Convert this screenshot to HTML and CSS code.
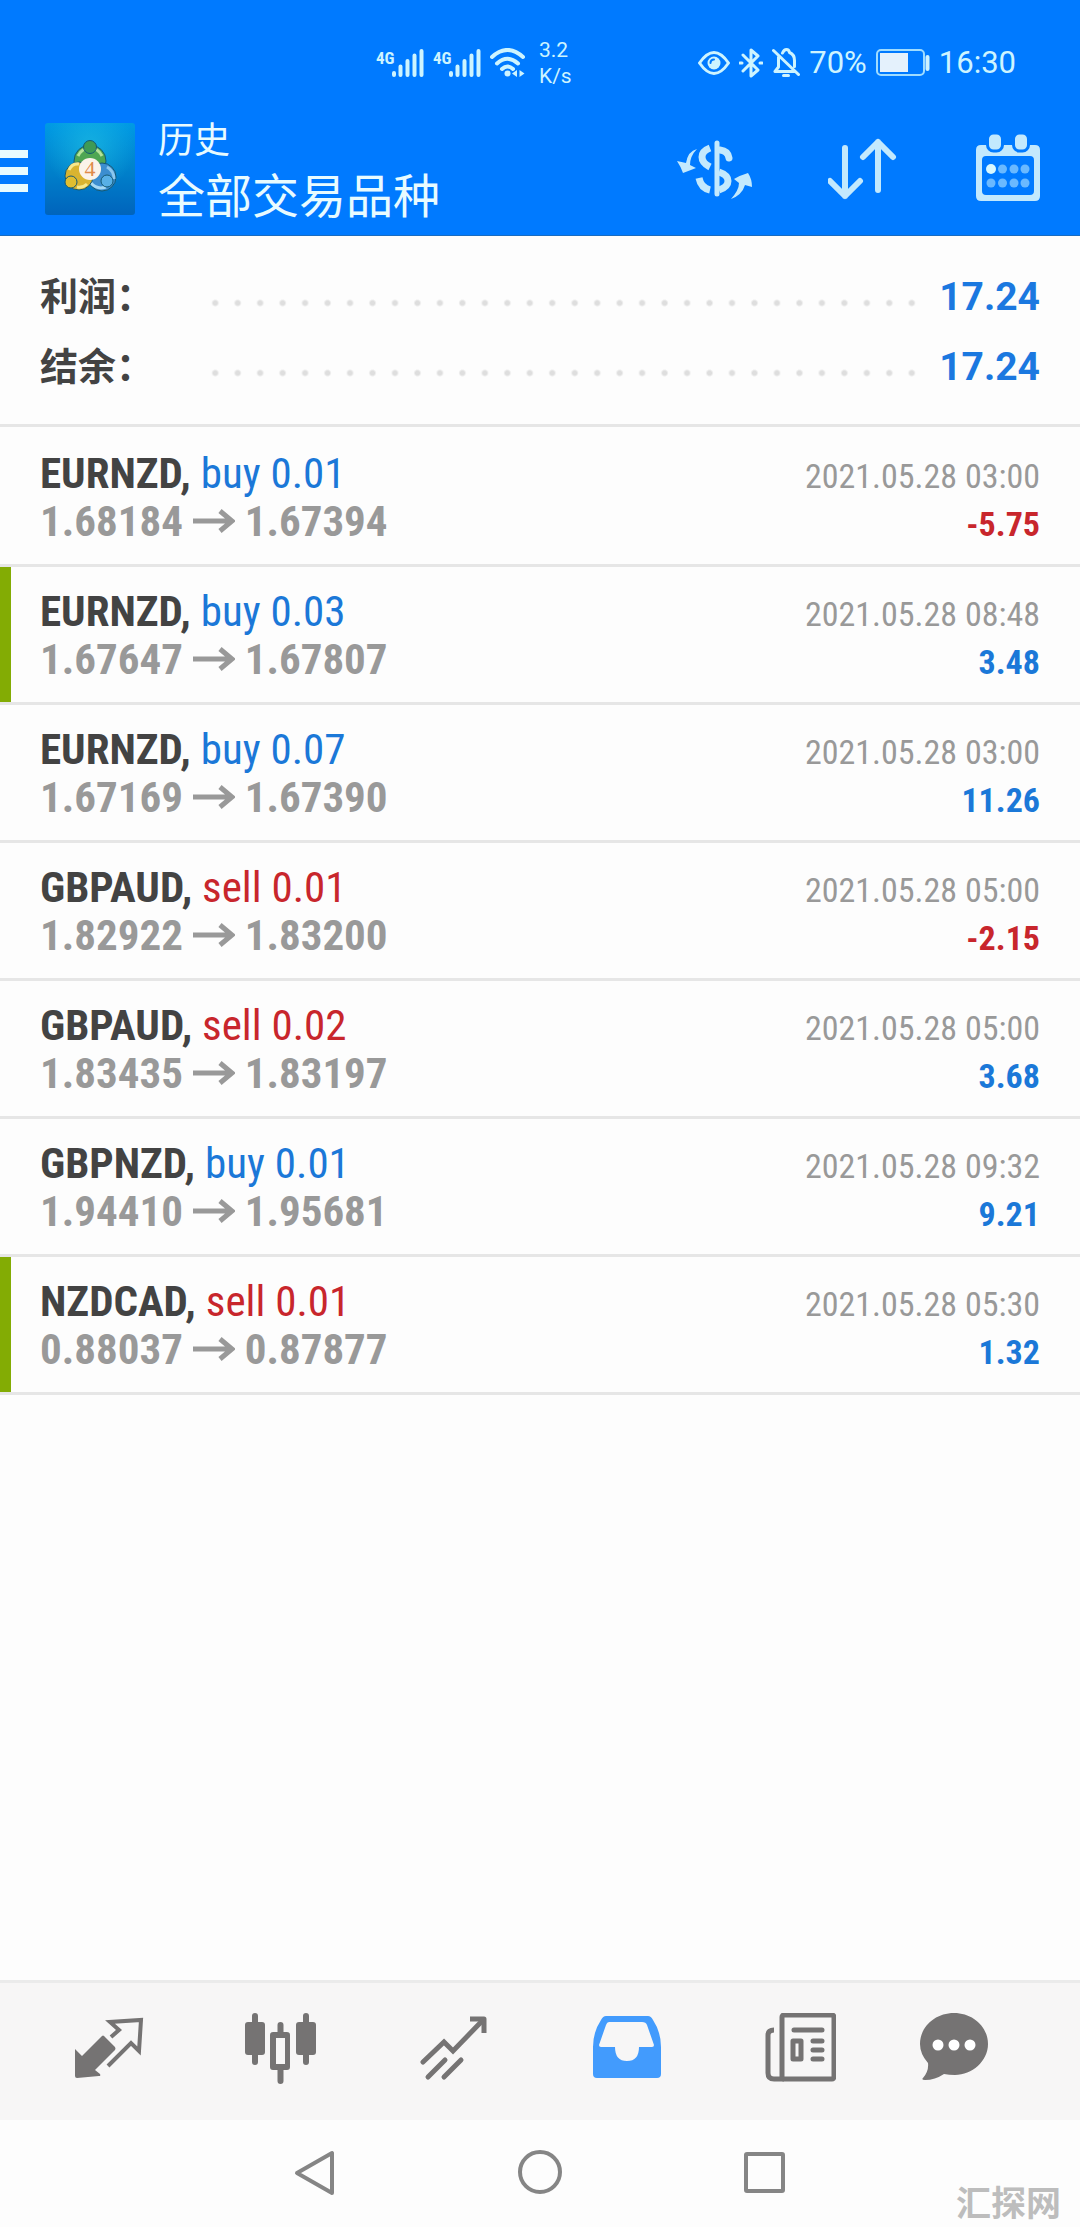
FILE: index.html
```html
<!DOCTYPE html>
<html lang="zh-CN">
<head>
<meta charset="utf-8">
<meta name="viewport" content="width=device-width, initial-scale=1">
<title>历史</title>
<link rel="stylesheet" href="styles.css">
</head>
<body>
<div class="app">
  <header class="top">
    <div class="status">
      <div class="status-left">
        <div class="signal"><span class="net">4G</span><svg width="32" height="30" viewBox="0 0 32 30" role="img" aria-label="信号"><path d="M2 27v-2M8.500 27v-8.500M15.500 27V13M22.500 27V7.500M29.500 27V3"/></svg></div>
        <div class="signal"><span class="net">4G</span><svg width="32" height="30" viewBox="0 0 32 30" role="img" aria-label="信号"><path d="M2 27v-2M8.500 27v-8.500M15.500 27V13M22.500 27V7.500M29.500 27V3"/></svg></div>
        <svg width="36" height="30" viewBox="0 0 36 30" class="wifi" role="img" aria-label="无线网络"><path d="M2 9Q17.500-5 33 9M7 15.500Q17.500 6 28 15.500M12 21q5.500-5 11 0"/><circle cx="17.500" cy="25.500" r="3"/><path class="solid" d="M27 22v7l-5-3.500zM29.500 22v7l5-3.500z"/></svg>
        <div class="speed">3.2<br>K/s</div>
      </div>
      <div class="status-right">
        <svg width="32" height="30" viewBox="0 0 32 30" class="line" aria-hidden="true"><path d="M1.500 15Q16-6 30.500 15Q16 36 1.500 15z"/><circle cx="16" cy="15" r="6.500" class="solid"/><path class="cut" d="M12.500 15q0-3.500 3.500-3.500"/></svg>
        <svg width="24" height="30" viewBox="0 0 24 30" class="line" aria-hidden="true"><path d="M4 7l15 15-7 6V2l7 6L4 23"/><path d="M1 15h2M21 15h2"/></svg>
        <svg width="28" height="30" viewBox="0 0 28 30" class="line" aria-hidden="true"><path d="M1.500 2.500l25 24M3 23.500h19M3 23.500l3.500-4.500V9M10.500 5q1.500-3.500 4-3.500t3 3q5 2 5 8v6M11.500 27.500h5"/></svg>
        <span class="pct">70%</span>
        <svg width="54" height="28" viewBox="0 0 54 28" aria-hidden="true"><rect x="1" y="1" width="47" height="25" rx="4" fill="none" stroke="#9fdcff" stroke-width="2"/><rect x="4" y="4" width="28" height="19" fill="#e4f1fc"/><path d="M51.500 8v12" stroke="#cdf1ff" stroke-width="4" stroke-linecap="round"/></svg>
        <span class="clock">16:30</span>
      </div>
    </div>
    <div class="bar">
      <button class="menu" aria-label="菜单"><svg width="28" height="42" viewBox="0 0 28 42"><path d="M0 0h28v8H0zM0 17h28v8H0zM0 34h28v8H0z" fill="#e8fbff"/></svg></button>
      <svg class="logo" width="90" height="92" viewBox="0 0 90 92" role="img" aria-label="MetaTrader 4">
        <defs>
          <linearGradient id="bg" x1="0" y1="0" x2="0" y2="1"><stop offset="0" stop-color="#009ae4"/><stop offset=".5" stop-color="#0082cc"/><stop offset="1" stop-color="#0064bc"/></linearGradient>
          <radialGradient id="glow" cx=".5" cy=".25" r=".5"><stop offset="0" stop-color="#22c4e4" stop-opacity=".6"/><stop offset="1" stop-color="#22c4e4" stop-opacity="0"/></radialGradient>
        </defs>
        <rect width="90" height="92" rx="3" fill="url(#bg)"/><rect width="90" height="92" fill="url(#glow)"/>
        <g stroke="#155a74" stroke-width="1">
          <circle cx="45" cy="38" r="16" fill="#4fa653"/><path d="M33 33q4-8 12-8t12 8" stroke="#b6e29a" stroke-width="3" fill="none"/>
          <circle cx="57" cy="54" r="14" fill="#3c8ed0"/><path d="M46 60q6 7 15 4" stroke="#a4d8f4" stroke-width="3" fill="none"/><path d="M62 44q7 4 7 12" stroke="#8cc8ee" stroke-width="3" fill="none"/>
          <circle cx="34" cy="53" r="14" fill="#d9b430"/><path d="M24 47q3-7 10-6" stroke="#f6e88c" stroke-width="3" fill="none"/><path d="M32 64q6 1 10-3" stroke="#f6e88c" stroke-width="3" fill="none"/>
          <circle cx="45" cy="24" r="6.500" fill="#3f9a55"/><circle cx="26" cy="59" r="6" fill="#e0be30"/><circle cx="62" cy="58" r="6" fill="#58b0e6"/>
        </g>
        <circle cx="45" cy="46" r="11" fill="#fbf3ea"/><text x="45" y="53" text-anchor="middle" class="four">4</text>
      </svg>
      <div class="titles"><div class="sub">历史</div><h1 class="title">全部交易品种</h1></div>
      <div class="actions">
        <button aria-label="品种"><svg width="76" height="72" viewBox="0 0 76 72"><g fill="none" stroke="#c3e9fd" stroke-width="7"><path d="M40 10v51" stroke-width="5" stroke-linecap="round"/><path d="M33 15q-8 3-8 9t8 10M22 45q2 10 11 12"/><path d="M43 17q8 1 9 8" stroke-linecap="round"/><path d="M42 39q9 3 9 9t-9 9"/></g><path fill="#c3e9fd" d="M20 16q-9 2-11 14L0 28q4 6 6 12 8-3 13-5l-6-3q0-9 7-16zM54 66q11-4 14-14l7 2q0-8-4-14-7 2-14 6l5 4q0 7-8 16z"/></svg></button>
        <button aria-label="排序"><svg width="72" height="72" viewBox="0 0 72 72" fill="none" stroke="#c3e9fd" stroke-width="6" stroke-linecap="round" stroke-linejoin="round"><path d="M17 15v48M2 48l15 15 15-15M50 57V9M35 24L50 9l15 15"/></svg></button>
        <button aria-label="日历"><svg width="66" height="72" viewBox="0 0 66 72"><path fill="#c3e9fd" fill-rule="evenodd" d="M6 12h54q5 0 5 5v46q0 5-5 5H6q-5 0-5-5V17q0-5 5-5zm5 11q-4 0-4 4v31q0 4 4 4h44q4 0 4-4V27q0-4-4-4z"/><g fill="#c3e9fd" stroke="#007aff" stroke-width="3"><rect x="12.500" y="0" width="15" height="18" rx="6"/><rect x="38.500" y="0" width="15" height="18" rx="6"/></g><g fill="#6ab9ff"><circle cx="16" cy="36" r="5" fill="#d8f8ff"/><circle cx="27.500" cy="36" r="4.500"/><circle cx="39" cy="36" r="4.500"/><circle cx="50" cy="36" r="4.500"/><circle cx="16" cy="50" r="4.500"/><circle cx="27.500" cy="50" r="4.500"/><circle cx="39" cy="50" r="4.500"/><circle cx="50" cy="50" r="4.500"/></g></svg></button>
      </div>
    </div>
  </header>

  <main class="content">
    <dl class="summary">
      <div class="sum-row"><dt>利润：</dt><dd class="dots" aria-hidden="true"></dd><dd>17.24</dd></div>
      <div class="sum-row"><dt>结余：</dt><dd class="dots" aria-hidden="true"></dd><dd>17.24</dd></div>
    </dl>
    <ul class="deals">
      <li class="deal"><div><div class="name">EURNZD, <span class="buy">buy 0.01</span></div><div class="price">1.68184 <svg class="arrow" viewBox="0 0 42 24"><path d="M0 12h38M27 2l12 10-12 10"/></svg> 1.67394</div></div><div class="right"><time>2021.05.28 03:00</time><div class="profit loss">-5.75</div></div></li>
      <li class="deal marked"><div><div class="name">EURNZD, <span class="buy">buy 0.03</span></div><div class="price">1.67647 <svg class="arrow" viewBox="0 0 42 24"><path d="M0 12h38M27 2l12 10-12 10"/></svg> 1.67807</div></div><div class="right"><time>2021.05.28 08:48</time><div class="profit">3.48</div></div></li>
      <li class="deal"><div><div class="name">EURNZD, <span class="buy">buy 0.07</span></div><div class="price">1.67169 <svg class="arrow" viewBox="0 0 42 24"><path d="M0 12h38M27 2l12 10-12 10"/></svg> 1.67390</div></div><div class="right"><time>2021.05.28 03:00</time><div class="profit">11.26</div></div></li>
      <li class="deal"><div><div class="name">GBPAUD, <span class="sell">sell 0.01</span></div><div class="price">1.82922 <svg class="arrow" viewBox="0 0 42 24"><path d="M0 12h38M27 2l12 10-12 10"/></svg> 1.83200</div></div><div class="right"><time>2021.05.28 05:00</time><div class="profit loss">-2.15</div></div></li>
      <li class="deal"><div><div class="name">GBPAUD, <span class="sell">sell 0.02</span></div><div class="price">1.83435 <svg class="arrow" viewBox="0 0 42 24"><path d="M0 12h38M27 2l12 10-12 10"/></svg> 1.83197</div></div><div class="right"><time>2021.05.28 05:00</time><div class="profit">3.68</div></div></li>
      <li class="deal"><div><div class="name">GBPNZD, <span class="buy">buy 0.01</span></div><div class="price">1.94410 <svg class="arrow" viewBox="0 0 42 24"><path d="M0 12h38M27 2l12 10-12 10"/></svg> 1.95681</div></div><div class="right"><time>2021.05.28 09:32</time><div class="profit">9.21</div></div></li>
      <li class="deal marked"><div><div class="name">NZDCAD, <span class="sell">sell 0.01</span></div><div class="price">0.88037 <svg class="arrow" viewBox="0 0 42 24"><path d="M0 12h38M27 2l12 10-12 10"/></svg> 0.87877</div></div><div class="right"><time>2021.05.28 05:30</time><div class="profit">1.32</div></div></li>
    </ul>
  </main>

  <nav class="tabs">
    <button aria-label="行情"><svg width="72" height="72" viewBox="0 0 72 72"><path fill="#757373" d="M3 36l7 7 20-20q1-1 2 0l11 11q1 2 0 3L23 57l5 4q1 2-1 2L5 65q-2 0-2-2z"/><path fill="none" stroke="#757373" stroke-width="4" d="M39 24l8-7-9-8 31-2-2 31-8-8-23 23"/></svg></button>
    <button aria-label="图表"><svg width="72" height="72" viewBox="0 0 72 72" fill="#757373"><rect x="0" y="9" width="20" height="33" rx="3"/><rect x="51" y="9" width="20" height="33" rx="3"/><path fill-rule="evenodd" d="M28 19h14q3 0 3 3v32q0 3-3 3H28q-3 0-3-3V22q0-3 3-3zm3 6v26h9V25z"/><path stroke="#757373" stroke-width="6" stroke-linecap="round" d="M10 3v46M61 3v46M35.500 12v8M35.500 56v12"/></svg></button>
    <button aria-label="交易"><svg width="72" height="72" viewBox="0 0 72 72" fill="none" stroke="#757373" stroke-width="5" stroke-linecap="round"><path d="M5 49l21-20 9 9L65 7"/><path d="M52 6h14v14" stroke-linecap="butt" stroke-linejoin="round"/><path d="M10 64l17-17M26 64l17-17"/></svg></button>
    <button aria-label="历史"><svg width="72" height="72" viewBox="0 0 72 72"><path fill="#429bfd" fill-rule="evenodd" d="M15 3h42q3 0 5 4 8 12 8 27v27q0 4-4 4H6q-4 0-4-4V34Q2 19 10 7q2-4 5-4zm3 6q-2 0-3 3L8 32q0 2 2 2h14q0 14 12 14t12-14h13q2 0 2-2l-7-20q-1-3-5-3z"/></svg></button>
    <button aria-label="新闻"><svg width="72" height="72" viewBox="0 0 72 72" fill="none" stroke="#757373" stroke-width="5" stroke-linejoin="round"><rect x="18" y="2" width="52" height="64" rx="2"/><path d="M10 17q-6 0-6 5v38q0 6 6 6h10"/><path stroke-linecap="round" d="M30 17h28M49 28h9M49 37h9M49 46h9"/><rect x="29" y="28" width="8" height="18"/></svg></button>
    <button aria-label="消息"><svg width="72" height="72" viewBox="0 0 72 72"><path fill="#757373" d="M37 0c19 0 34 14 34 31S55 62 38 62q-6 0-11-1-9 6-19 6-4 0-2-2 6-7 5-15-8-9-8-19C3 14 18 0 37 0z"/><g fill="#fff"><circle cx="21" cy="32" r="5.500"/><circle cx="37" cy="32" r="5.500"/><circle cx="53" cy="32" r="5.500"/></g></svg></button>
  </nav>
  <div class="sysnav">
    <button aria-label="返回"><svg width="46" height="46" viewBox="0 0 46 46"><path d="M40 3v40L5 23z"/></svg></button>
    <button aria-label="主页"><svg width="46" height="46" viewBox="0 0 46 46"><circle cx="23" cy="22" r="20"/></svg></button>
    <button aria-label="最近任务"><svg width="46" height="46" viewBox="0 0 46 46"><rect x="4" y="4" width="37" height="37" rx="1"/></svg></button>
    <span class="watermark">汇探网</span>
  </div>
</div>
</body>
</html>
```

FILE: styles.css
```css
* { box-sizing: border-box; }
body { margin: 0; background: #fdfdfd; font-family: Roboto, "Noto Sans CJK SC", sans-serif; }
button { border: 0; padding: 0; background: none; display: flex; align-items: center; justify-content: center; cursor: pointer; }
svg { display: block; flex: none; }
.app { min-height: 100vh; display: flex; flex-direction: column; }

.top { background: #007aff; border-bottom: 1px solid #1a6cc0; color: #e8fbff; }
.status { height: 100px; padding: 26px 64px 0 376px; display: flex; justify-content: space-between; align-items: center; color: #cdf4ff; }
.status-left, .status-right { display: flex; align-items: center; }
.status-left { gap: 9px; }
.status-right { gap: 9px; font-size: 31px; line-height: 38px; }
.signal { display: flex; width: 48px; justify-content: space-between; align-items: flex-start; }
.signal path { stroke: #cdf4ff; stroke-width: 4; stroke-linecap: round; fill: none; }
.net { width: 16px; font: bold 17px/20px "Roboto Condensed", "Liberation Sans Narrow", Roboto, sans-serif; }
.wifi { fill: #cdf4ff; }
.wifi path { fill: none; stroke: #cdf4ff; stroke-width: 4; stroke-linecap: round; }
.wifi .solid { fill: #cdf4ff; stroke: none; }
.speed { font-size: 21px; line-height: 26px; margin-left: 4px; }
.line { fill: none; stroke: #cdf4ff; stroke-width: 3; stroke-linejoin: round; stroke-linecap: round; }
.line .solid { fill: #cdf4ff; stroke: none; }
.line .cut { stroke: #007aff; stroke-width: 2; }

.bar { height: 135px; padding: 3px 39px 0 0; display: flex; align-items: center; }
.menu { margin-right: 17px; padding-top: 4px; }
.four { font: 22px "Liberation Serif", serif; fill: #e08a4a; }
.titles { margin-left: 23px; padding-top: 3px; }
.sub { font-size: 36px; line-height: 52px; }
.title { margin: 0; font-size: 47px; line-height: 60px; font-weight: 400; }
.actions { margin-left: auto; display: flex; gap: 75px; }

.content { flex: 1; }
.summary { margin: 0; padding: 26px 40px 22px; border-bottom: 3px solid #e6e6e6; }
.sum-row { display: flex; align-items: center; height: 70px; font-weight: 700; }
.sum-row dt { width: 164px; font-size: 38px; line-height: 56px; color: #434343; }
.sum-row dd { margin: 0; font-size: 39px; line-height: 48px; color: #1b78e0; }
.sum-row .dots { flex: 1; height: 8px; margin: 12px 16px 0 0; background: radial-gradient(circle, #dedede 2px, transparent 4px) 0 0 / calc(100% / 32) 8px; }

.deals { list-style: none; margin: 0; padding: 2px 0 0; font-family: "Roboto Condensed", "Liberation Sans Narrow", Roboto, sans-serif; }
.deal { height: 138px; padding: 20px 40px 0; border-bottom: 3px solid #e6e6e6; display: flex; justify-content: space-between; }
.marked { box-shadow: inset 11px 0 #83ac04; }
.name, .price { font-size: 43px; line-height: 48px; font-weight: 700; white-space: nowrap; }
.name { color: #434343; }
.buy, .sell { font-weight: 400; }
.buy { color: #1b78d8; }
.sell { color: #c8262c; }
.price { color: #999; }
.arrow { display: inline-block; width: 42px; height: 24px; fill: none; stroke: #999; stroke-width: 5; vertical-align: 3px; }
.right { text-align: right; padding-top: 3px; }
.right time { display: block; font-size: 34px; line-height: 48px; color: #999; }
.profit { font-size: 34px; line-height: 48px; font-weight: 700; color: #1b78d8; }
.loss { color: #c8262c; }

.tabs { height: 140px; padding: 0 60px 6px 22px; border-top: 3px solid #ebebeb; background: #f7f6f6; display: grid; grid-template-columns: repeat(5, 13fr) 10fr; }
.sysnav { position: relative; height: 107px; padding: 0 202px 1px; display: grid; grid-template-columns: repeat(3, 1fr); }
.sysnav svg { fill: none; stroke: #858585; stroke-width: 4; stroke-linejoin: round; }
.watermark { position: absolute; right: 19px; bottom: 1px; font-size: 35px; line-height: 42px; font-weight: 700; color: #bdbdbd; }
```
